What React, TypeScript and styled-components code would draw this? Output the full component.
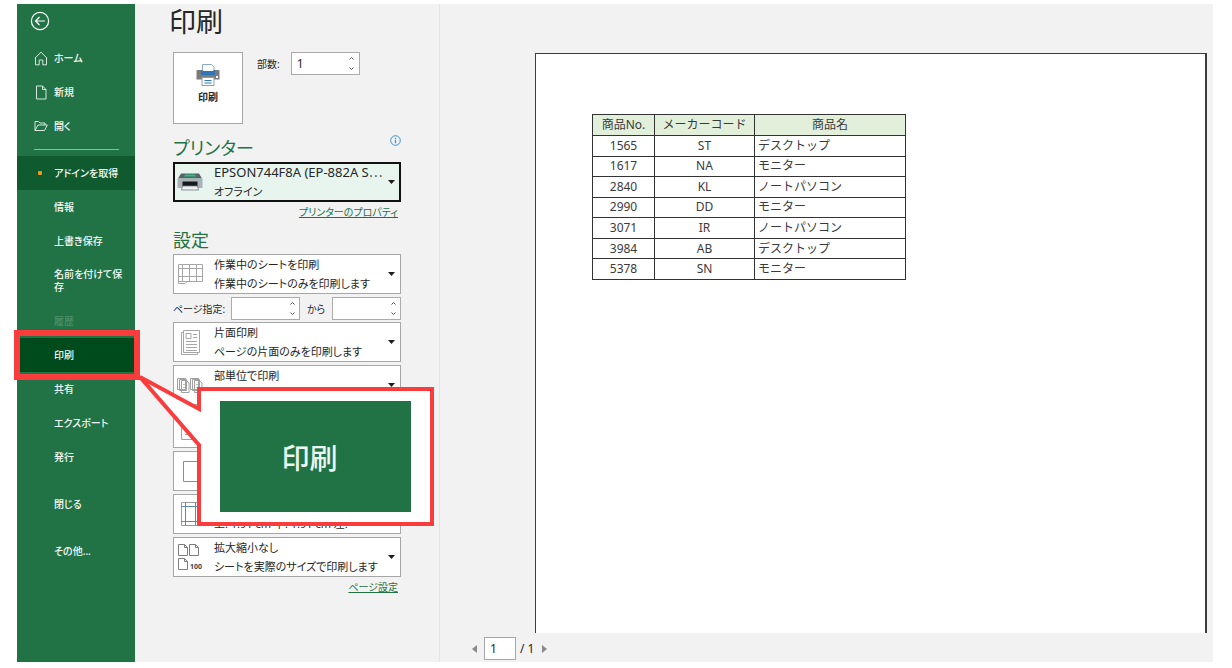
import React, { useState } from "react";
import styled, { createGlobalStyle, css } from "styled-components";

const GREEN = "#217346";
const RED = "#fa3c3c";

const GlobalStyle = createGlobalStyle`
  * { box-sizing: border-box; }
  body {
    margin: 0;
    background: #fff;
    color: #262626;
    font-family: "Noto Sans", "Noto Sans CJK JP", sans-serif;
    font-size: 12px;
    font-feature-settings: "palt";
  }
  button, input, select { font: inherit; font-feature-settings: inherit; color: inherit; }
`;

const Window = styled.div`
  display: flex;
  min-height: 100vh;
  padding: 4px 19px 6px 17px;
`;

/* ---------- backstage menu ---------- */

const Sidebar = styled.nav`
  flex: 0 0 118px;
  display: flex;
  flex-direction: column;
  background: ${GREEN};
  color: #fff;
`;

const BackButton = styled.button`
  display: flex;
  width: 20px;
  height: 20px;
  margin: 7px 0 10px 13px;
  padding: 0;
  border: 0;
  background: none;
  color: #fff;
  cursor: pointer;
`;

const MenuList = styled.ul`
  margin: 0;
  padding: 0;
  list-style: none;
`;

const MenuItem = styled.li<{ $spaced?: boolean }>`
  position: relative;
  margin-top: ${(p) => (p.$spaced ? 13 : 0)}px;
`;

const MenuLink = styled.a<{ $tone?: "current" | "hover" | "disabled"; $tall?: boolean }>`
  display: grid;
  grid-template-columns: 16px 1fr;
  column-gap: 5px;
  align-items: center;
  min-height: ${(p) => (p.$tall ? 46 : 34)}px;
  padding: 0 8px 0 16px;
  font-size: 10px;
  font-weight: 500;
  line-height: 13px;
  color: #f3faf5;
  text-decoration: none;
  ${(p) => p.$tone === "current" && css`background: #004b1c;`}
  ${(p) => p.$tone === "hover" && css`background: #0f5b2f;`}
  ${(p) => p.$tone === "disabled" && css`color: #4f9069;`}
`;

const IconSlot = styled.span`
  display: flex;
  justify-content: center;
`;

const Dot = styled.span`
  width: 4px;
  height: 4px;
  margin-right: 2px;
  border-radius: 1px;
  background: #f0961e;
`;

const MenuRule = styled.hr`
  width: 85px;
  margin: 6px 0 6px 17px;
  border: 0;
  border-top: 1px solid #8fbb9f;
`;

/* ---------- highlight and callout ---------- */

const Highlight = styled.span`
  position: absolute;
  z-index: 3;
  inset: -8px -5px -8px -3px;
  border: 6px solid ${RED};
  pointer-events: none;
`;

const Callout = styled.div`
  position: absolute;
  z-index: 2;
  left: 113px;
  top: 32px;
  width: 304px;
  height: 156px;
  padding: 31px 23px 14px 90px;
  pointer-events: none;
`;

const CalloutOutline = styled.svg`
  position: absolute;
  inset: 0;
`;

const CalloutLabel = styled.div`
  position: relative;
  display: flex;
  align-items: center;
  justify-content: center;
  height: 111px;
  padding-right: 12px;
  background: ${GREEN};
  color: #ecf7f0;
  font-size: 28px;
  font-weight: 500;
`;

/* ---------- print settings ---------- */

const Settings = styled.main`
  flex: 0 0 305px;
  padding: 0 38px 0 38px;
  border-right: 1px solid #e4e4e4;
  background: #f2f2f2;
`;

const PageTitle = styled.h1`
  margin: 0 0 0 -4px;
  height: 48px;
  font-size: 27px;
  font-weight: 400;
  line-height: 36px;
`;

const PrintRow = styled.div`
  display: flex;
  align-items: flex-start;
  gap: 14px;
`;

const PrintButton = styled.button`
  display: flex;
  flex-direction: column;
  align-items: center;
  gap: 3px;
  width: 70px;
  height: 72px;
  padding: 11px 0 0;
  border: 1px solid #a6a6a6;
  background: #fff;
  font-size: 10px;
  font-weight: 700;
  line-height: 16px;
  cursor: pointer;
`;

const CopiesField = styled.div`
  display: flex;
  align-items: center;
  gap: 11px;
  font-size: 10px;
`;

const SpinBox = styled.span`
  display: flex;
  width: 69px;
  height: 23px;
  border: 1px solid #ababab;
  background: #fff;
`;

const SpinInput = styled.input`
  flex: 1;
  min-width: 0;
  padding: 0 5px;
  border: 0;
  background: none;
  font-size: 12px;
  outline: none;
`;

const SpinButtons = styled.span`
  display: flex;
  flex-direction: column;
  width: 14px;
`;

const SpinButton = styled.button`
  display: flex;
  flex: 1;
  align-items: center;
  justify-content: center;
  padding: 0;
  border: 0;
  background: none;
`;

const SectionHead = styled.div`
  display: flex;
  justify-content: space-between;
  align-items: flex-start;
  height: 38px;
  padding-top: 11px;
`;

const SectionTitle = styled.h2<{ $below?: boolean }>`
  margin: ${(p) => (p.$below ? 4 : 0)}px 0 0;
  font-size: 18px;
  font-weight: 400;
  line-height: 27px;
  color: ${GREEN};
`;

const InfoButton = styled.button`
  display: flex;
  padding: 0;
  border: 0;
  background: none;
`;

const Stack = styled.div`
  display: flex;
  flex-direction: column;
  gap: 3px;
`;

const Card = styled.label<{ $active?: boolean }>`
  display: grid;
  grid-template-columns: 32px 1fr 13px;
  align-items: center;
  height: 40px;
  padding-left: 9px;
  outline: ${(p) => (p.$active ? "2px solid #111" : "1px solid #a6a6a6")};
  outline-offset: ${(p) => (p.$active ? -2 : -1)}px;
  background: ${(p) => (p.$active ? "#e8f5ee" : "#fff")};
`;

const CardIcon = styled.span`
  display: flex;
  align-items: center;
  margin-left: -5px;
  width: 26px;
  justify-content: center;
`;

const CardText = styled.span<{ $latin?: boolean }>`
  display: flex;
  flex-direction: column;
  min-width: 0;
  font-size: 11px;
  line-height: 19px;
  white-space: nowrap;

  select { font-size: ${(p) => (p.$latin ? 13 : 11)}px; }
`;

const CardSelect = styled.select`
  width: 100%;
  height: 19px;
  padding: 0;
  border: 0;
  outline: none;
  appearance: none;
  background: none;
`;

const LinkRow = styled.div`
  padding-right: 3px;
  text-align: right;
  font-size: 10px;
  line-height: 21px;
`;

const TextLink = styled.a`
  color: ${GREEN};
`;

const RangeRow = styled.div`
  display: grid;
  grid-template-columns: 58px 69px 1fr 69px;
  align-items: center;
  height: 22px;
  font-size: 10px;
`;

const RangeTo = styled.label`
  text-align: center;
`;

/* ---------- preview ---------- */

const Preview = styled.section`
  flex: 1;
  display: flex;
  flex-direction: column;
  min-width: 0;
  padding: 49px 6px 2px 32px;
  background: #f2f2f2;
`;

const Paper = styled.div`
  flex: 1;
  margin-left: 63px;
  padding: 60px 56px;
  border: solid #3c3c3c;
  border-width: 1px 2px 0 1px;
  background: #fff;
`;

const Sheet = styled.table`
  width: 314px;
  height: 166px;
  border-collapse: collapse;
  table-layout: fixed;
  color: #3a3a3a;
  font-feature-settings: normal;
  font-size: 12px;
  line-height: 16px;

  th, td {
    padding: 0 3px;
    border: 1px solid #333;
    font-weight: 400;
    text-align: center;
  }
  th { height: 21px; background: #e2efda; }
  td:last-child { text-align: left; }
`;

const Pager = styled.form`
  display: flex;
  align-items: center;
  height: 27px;
  padding-top: 4px;
`;

const PagerButton = styled.button`
  display: flex;
  padding: 0;
  border: 0;
  background: none;
`;

const PageInput = styled.input`
  width: 32px;
  height: 23px;
  margin: 0 4px 0 7px;
  padding: 0 5px;
  border: 1px solid #a6a6a6;
  background: #fff;
`;

const PageTotal = styled.span`
  margin-right: 8px;
`;

/* ---------- icons ---------- */

const BackIcon = () => (
  <svg width="20" height="20" viewBox="0 0 20 20" fill="none" stroke="currentColor" strokeWidth="1.2">
    <circle cx="10" cy="10" r="8.6" />
    <path d="M15 10H5.5M9.5 6l-4 4 4 4" />
  </svg>
);
const HomeIcon = () => (
  <svg width="14" height="15" viewBox="0 0 14 15" fill="none" stroke="#d5eadd">
    <path d="M.8 7.3 7 1.2l6.2 6.1M1.5 6.8v7h3.7V9h3.6v4.8h3.7v-7" />
  </svg>
);
const NewIcon = () => (
  <svg width="12" height="15" viewBox="0 0 12 15" fill="none" stroke="#d5eadd">
    <path d="M1.5 1h6l3.5 3.5V14H1.5zM7.5 1v3.5H11" />
  </svg>
);
const OpenIcon = () => (
  <svg width="14" height="12" viewBox="0 0 14 12" fill="none" stroke="#d5eadd">
    <path d="M1 10.5v-9h3.5L6 3h5v2M1 10.5 4 5h9.3l-2.8 5.5z" />
  </svg>
);
const PrintIcon = () => (
  <svg width="24" height="22" viewBox="0 0 24 22">
    <path d="M1.5 6h21q1 0 1 1v8.5H.5V7q0-1 1-1z" fill="#7b7b7b" />
    <rect x="20" y="12" width="2" height="2" fill="#fff" />
    <path d="M6.5.5h9L18 3v7H6.500z" fill="#fff" stroke="#8aa6c8" />
    <path d="M5 6h1.500v1h11V6H19v5H5z" fill="#2f75b5" />
    <path d="M6 13.500h12v8H6z" fill="#fff" stroke="#8e9bab" />
    <path d="M8.500 16.500h7M8.500 19h7" stroke="#2f75b5" />
  </svg>
);
const PrinterIcon = () => (
  <svg width="26" height="18" viewBox="0 0 26 18">
    <path d="M4 .5h18l3 5H1z" fill="#59636b" />
    <path d="M8 1.500h10l1 2H7z" fill="#27c07d" />
    <path d="M.5 5.500h25V15H.5z" fill="#a9b2b9" />
    <path d="M5.500 8.500h15V14h-15z" fill="#15191c" />
    <path d="M5.500 13h15l1 4h-17z" fill="#eef1f3" stroke="#737b82" strokeWidth=".8" />
  </svg>
);
const SheetIcon = () => (
  <svg width="25" height="20" viewBox="0 0 25 20" fill="none" stroke="#a6a6a6">
    <path d="M.5.5h24v17H9l-2 2H.5zM.5 4.500h24M.5 12.500h24M4.500.5v17M11.500.5v17M18.500.5v17M.5 17.500H9" />
  </svg>
);
const PageIcon = () => (
  <svg width="19" height="25" viewBox="0 0 19 25" fill="none" stroke="#a6a6a6">
    <path d="M2.500.5h16v22h-16zM2.500 2.500h-2v22h16v-2" />
    <path d="M5 3.500h5v5H5zM12 4.500h4M12 7.500h4M5 11.500h11M5 14.500h11M5 17.500h11M5 20.500h11" />
  </svg>
);
const CollateIcon = () => (
  <svg width="26" height="15" viewBox="0 0 26 15" fill="#fff" stroke="#a0a0a0">
    <path d="M.5.500h8v11h-8zM2.500 1.500h7v11h-7zM4.500 2.500h5l2.500 2.500v9.500H4.500z" />
    <path d="M13.500.5h8v11h-8zM15.500 1.500h7v11h-7zM17.500 2.500h5l2.500 2.500v9.500h-7.500z" />
    <path d="M6 6.500h4M6 9.500h4M6 12h4M19 6.500h4M19 9.500h4M19 12h4" strokeWidth=".7" />
  </svg>
);
const PortraitIcon = () => (
  <svg width="18" height="24" viewBox="0 0 18 24" fill="none" stroke="#a2a2a2">
    <path d="M.5.5h11l6 6v17H.5zM11.500.5v6h6M4 12.500h10M4 15.500h10M4 18.500h10" />
  </svg>
);
const SizeIcon = () => (
  <svg width="15" height="21" viewBox="0 0 15 21" fill="none" stroke="#8c8c8c">
    <path d="M.5.5h14v20H.5z" />
  </svg>
);
const MarginIcon = () => (
  <svg width="19" height="24" viewBox="0 0 19 24" fill="none">
    <path d="M.5.5h18v23H.5z" stroke="#9a9a9a" />
    <path d="M4.500.5v23M14.500.5v23M.5 4.500h18M.5 19.500h18" stroke="#5b87c5" />
  </svg>
);
const ScaleText = styled.text`
  font-family: "Noto Sans", sans-serif;
  font-size: 7px;
  font-weight: 700;
  fill: #444;
`;
const ScaleIcon = () => (
  <svg width="26" height="28" viewBox="0 0 26 28" fill="#fff" stroke="#7d7d7d">
    <path d="M1.500 1.500h6l3 3v8h-9zM7.500 1.500v3h3M12.500 1.500h6l3 3v8h-9zM18.500 1.500v3h3M1.500 15.500h6l3 3v8h-9zM7.500 15.500v3h3" />
    <ScaleText x="13" y="26" stroke="none">100</ScaleText>
  </svg>
);
const InfoIcon = () => (
  <svg width="11" height="11" viewBox="0 0 11 11" fill="none" stroke="#3b93d6">
    <circle cx="5.500" cy="5.500" r="4.800" />
    <path d="M5.500 4.800v3.400M5.500 2.700v1.200" strokeWidth="1.300" />
  </svg>
);
const Caret = () => (
  <svg width="7" height="4" viewBox="0 0 7 4">
    <path d="M0 0h7L3.500 4z" fill="#1c1c1c" />
  </svg>
);
const Chevron = ({ down }: { down?: boolean }) => (
  <svg width="5" height="3" viewBox="0 0 5 3" fill="none" stroke="#555">
    <path d={down ? "M.5.5l2 2 2-2" : "M.5 2.500l2-2 2 2"} />
  </svg>
);
const PageArrow = ({ next }: { next?: boolean }) => (
  <svg width="5" height="8" viewBox="0 0 5 8">
    <path d={next ? "M0 0v8l5-4z" : "M5 0v8L0 4z"} fill="#8a8a8a" />
  </svg>
);

/* ---------- composed parts ---------- */

function NumberField({ id, initial = "" }: { id: string; initial?: string }) {
  const [value, setValue] = useState(initial);
  const step = (by: number) => setValue(String(Math.max(1, (Number(value) || 0) + by)));
  return (
    <SpinBox>
      <SpinInput id={id} inputMode="numeric" value={value} onChange={(e) => setValue(e.target.value)} />
      <SpinButtons>
        <SpinButton type="button" aria-label="増やす" onClick={() => step(1)}><Chevron /></SpinButton>
        <SpinButton type="button" aria-label="減らす" onClick={() => step(-1)}><Chevron down /></SpinButton>
      </SpinButtons>
    </SpinBox>
  );
}

type OptionProps = {
  icon: React.ReactNode;
  name: string;
  title?: string;
  detail?: string;
  active?: boolean;
  latin?: boolean;
};

function OptionCard({ icon, name, title = "", detail = "", active, latin }: OptionProps) {
  return (
    <Card $active={active}>
      <CardIcon>{icon}</CardIcon>
      <CardText $latin={latin}>
        <CardSelect aria-label={name} defaultValue={title}>
          <option>{title}</option>
        </CardSelect>
        <span>{detail || "\u00a0"}</span>
      </CardText>
      <Caret />
    </Card>
  );
}

const products = [
  ["1565", "ST", "デスクトップ"],
  ["1617", "NA", "モニター"],
  ["2840", "KL", "ノートパソコン"],
  ["2990", "DD", "モニター"],
  ["3071", "IR", "ノートパソコン"],
  ["3984", "AB", "デスクトップ"],
  ["5378", "SN", "モニター"],
];

type Entry = {
  text: string;
  icon?: React.ReactNode;
  tone?: "current" | "hover" | "disabled";
  spaced?: boolean;
  tall?: boolean;
};

const startEntries: Entry[] = [
  { text: "ホーム", icon: <HomeIcon /> },
  { text: "新規", icon: <NewIcon /> },
  { text: "開く", icon: <OpenIcon /> },
];

const fileEntries: Entry[] = [
  { text: "アドインを取得", icon: <Dot />, tone: "hover" },
  { text: "情報" },
  { text: "上書き保存" },
  { text: "名前を付けて保存", tall: true },
  { text: "履歴", tone: "disabled" },
  { text: "印刷", tone: "current" },
  { text: "共有" },
  { text: "エクスポート" },
  { text: "発行" },
  { text: "閉じる", spaced: true },
  { text: "その他...", spaced: true },
];

const Menu = ({ entries }: { entries: Entry[] }) => (
  <MenuList>
    {entries.map(({ text, icon, tone, spaced, tall }) => (
      <MenuItem key={text} $spaced={spaced}>
        <MenuLink href="#" $tone={tone} $tall={tall} aria-current={tone === "current" ? "page" : undefined}>
          <IconSlot>{icon}</IconSlot>
          {text}
        </MenuLink>
        {tone === "current" && (
          <>
            <Callout>
              <CalloutOutline width="304" height="156" viewBox="0 0 304 156">
                <path d="M69 19H302V154H69V75L10 7L69 39Z" fill="#fff" stroke={RED} strokeWidth="4" />
              </CalloutOutline>
              <CalloutLabel>印刷</CalloutLabel>
            </Callout>
            <Highlight />
          </>
        )}
      </MenuItem>
    ))}
  </MenuList>
);

export default function App() {
  return (
    <>
      <GlobalStyle />
      <Window>
        <Sidebar>
          <BackButton aria-label="戻る"><BackIcon /></BackButton>
          <Menu entries={startEntries} />
          <MenuRule />
          <Menu entries={fileEntries} />
        </Sidebar>

        <Settings>
          <PageTitle>印刷</PageTitle>
          <PrintRow>
            <PrintButton><PrintIcon />印刷</PrintButton>
            <CopiesField>
              <label htmlFor="copies">部数:</label>
              <NumberField id="copies" initial="1" />
            </CopiesField>
          </PrintRow>

          <SectionHead>
            <SectionTitle>プリンター</SectionTitle>
            <InfoButton aria-label="プリンターの状態"><InfoIcon /></InfoButton>
          </SectionHead>
          <OptionCard active latin icon={<PrinterIcon />} name="プリンター" title="EPSON744F8A (EP-882A S⋯" detail="オフライン" />
          <LinkRow><TextLink href="#">プリンターのプロパティ</TextLink></LinkRow>

          <SectionTitle $below>設定</SectionTitle>
          <Stack>
            <OptionCard icon={<SheetIcon />} name="印刷対象" title="作業中のシートを印刷" detail="作業中のシートのみを印刷します" />
            <RangeRow>
              <label htmlFor="page-from">ページ指定:</label>
              <NumberField id="page-from" />
              <RangeTo htmlFor="page-to">から</RangeTo>
              <NumberField id="page-to" />
            </RangeRow>
            <OptionCard icon={<PageIcon />} name="片面・両面" title="片面印刷" detail="ページの片面のみを印刷します" />
            <OptionCard icon={<CollateIcon />} name="印刷順" title="部単位で印刷" />
            <OptionCard icon={<PortraitIcon />} name="印刷の向き" />
            <OptionCard icon={<SizeIcon />} name="用紙サイズ" />
            <OptionCard icon={<MarginIcon />} name="余白" detail="上: 1.91 cm 下: 1.91 cm 左:" />
            <OptionCard icon={<ScaleIcon />} name="拡大縮小" title="拡大縮小なし" detail="シートを実際のサイズで印刷します" />
          </Stack>
          <LinkRow><TextLink href="#">ページ設定</TextLink></LinkRow>
        </Settings>

        <Preview>
          <Paper>
            <Sheet>
              <colgroup>
                <col width="62" />
                <col width="100" />
                <col />
              </colgroup>
              <thead>
                <tr><th>商品No.</th><th>メーカーコード</th><th>商品名</th></tr>
              </thead>
              <tbody>
                {products.map(([no, maker, name]) => (
                  <tr key={no}><td>{no}</td><td>{maker}</td><td>{name}</td></tr>
                ))}
              </tbody>
            </Sheet>
          </Paper>
          <Pager>
            <PagerButton type="button" aria-label="前のページ"><PageArrow /></PagerButton>
            <PageInput aria-label="ページ" defaultValue="1" />
            <PageTotal>/ 1</PageTotal>
            <PagerButton type="button" aria-label="次のページ"><PageArrow next /></PagerButton>
          </Pager>
        </Preview>
      </Window>
    </>
  );
}
